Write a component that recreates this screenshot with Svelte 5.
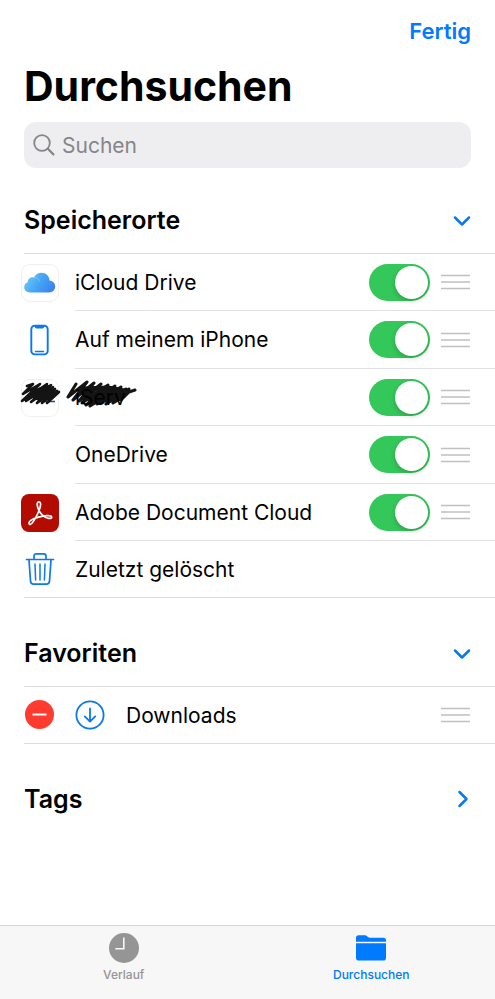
<script lang="ts">
    type Location = {
        id: string;
        name: string;
        enabled?: boolean;
        scribbled?: boolean;
    };

    let locations: Location[] = $state([
        { id: "icloud", name: "iCloud Drive", enabled: true },
        { id: "phone", name: "Auf meinem iPhone", enabled: true },
        { id: "iserv", name: "iServ", enabled: true, scribbled: true },
        { id: "onedrive", name: "OneDrive", enabled: true },
        { id: "adobe", name: "Adobe Document Cloud", enabled: true },
        { id: "trash", name: "Zuletzt gelöscht" },
    ]);

    let open = $state({ locations: true, favorites: true, tags: false });
    let favorites = $state(["Downloads"]);
    let tab = $state("browse");
    let query = $state("");

    const removeFavorite = (name: string) => {
        favorites = favorites.filter((f) => f !== name);
    };
</script>

{#snippet chevron(isOpen: boolean)}
    <svg class="chevron" class:closed={!isOpen} width="18" height="18" viewBox="0 0 18 18">
        <path d="M2 6.5L9 13.5L16 6.5" />
    </svg>
{/snippet}

{#snippet handle(name: string)}
    <button class="handle" aria-label="{name} verschieben">
        <svg width="29" height="18" viewBox="0 0 29 18">
            <path d="M0 2.5H29M0 9H29M0 15.5H29" stroke="#c0c0c2" stroke-width="1.6" />
        </svg>
    </button>
{/snippet}

{#snippet icon(id: string)}
    {#if id === "icloud"}
        <svg width="38" height="38" viewBox="0 0 38 38">
            <defs>
                <linearGradient id="cloud" x1="0" y1="0.3" x2="1" y2="0.7">
                    <stop offset="0" stop-color="#6cc8fa" />
                    <stop offset="0.5" stop-color="#45a4f5" />
                    <stop offset="1" stop-color="#3b82ee" />
                </linearGradient>
            </defs>
            <rect x="0.5" y="0.5" width="37" height="37" rx="8.5" fill="#fff" stroke="#f0f0f2" />
            <path
                d="M9 28.5C5.6 28.5 3.2 26.4 3.2 23.3C3.2 20.9 4.6 19 6.8 18.3C6.5 15.2 9.4 12.6 12.9 13.4C14.4 10.4 17.2 8.7 20.5 8.7C25 8.7 28.3 12 28.6 16.4C32 16.9 34.2 19.2 34.2 22.3C34.2 25.9 31.6 28.5 28.2 28.5Z"
                fill="url(#cloud)"
            />
            <path d="M12.9 13.4C15.8 13.4 18 15.2 18.8 17.6" fill="none" stroke="#fff" stroke-opacity="0.25" />
        </svg>
    {:else if id === "phone"}
        <svg width="38" height="38" viewBox="0 0 38 38" fill="none" stroke="#0a78f0">
            <rect x="10.3" y="4.8" width="16.4" height="28.6" rx="3.4" stroke-width="1.9" />
            <path d="M14 5H23V6C23 6.9 22.4 7.4 21.5 7.4H15.5C14.6 7.4 14 6.9 14 6Z" fill="#0a78f0" stroke="none" />
            <path d="M14.5 30.4H22.5" stroke-width="1.5" stroke-linecap="round" />
        </svg>
    {:else if id === "iserv"}
        <svg width="38" height="38" viewBox="0 0 38 38">
            <rect x="0.5" y="0.5" width="37" height="37" rx="8.5" fill="#fff" stroke="#f0f0f2" />
            <path d="M18 22.5H34" stroke="#284a7c" stroke-width="1.5" />
        </svg>
    {:else if id === "adobe"}
        <svg width="38" height="38" viewBox="0 0 38 38">
            <rect width="38" height="38" rx="8" fill="#b30b00" />
            <path
                d="M8 29.5C7.6 27 12.5 24.5 17.5 23.1C22.5 21.7 30.3 20.6 30.7 23C31 25.3 25.5 25 21.4 21.2C18 18 16 12.6 16.2 9.8C16.4 7.3 19.4 7.3 19.6 10C19.8 13.8 15.4 23.5 11.8 28.3C10 30.6 8.2 31 8 29.5Z"
                fill="none"
                stroke="#fff"
                stroke-width="1.7"
                stroke-linejoin="round"
            />
        </svg>
    {:else if id === "trash"}
        <svg width="38" height="38" viewBox="0 0 38 38" fill="none" stroke="#0a78f0" stroke-width="1.7" stroke-linecap="round" stroke-linejoin="round">
            <path d="M5.5 9.5H32.5" />
            <path d="M13 9V6.2C13 4.7 14 3.8 15.4 3.8H22.6C24 3.8 25 4.7 25 6.2V9" />
            <path d="M8 9.8L9.5 31C9.6 33 10.9 34.2 12.8 34.2H25.2C27.1 34.2 28.4 33 28.5 31L30 9.8" />
            <path d="M14 14L14.6 30M19 14V30M24 14L23.4 30" stroke-width="1.5" />
        </svg>
    {/if}
{/snippet}

<div class="page">
    <main>
        <header>
            <button class="done">Fertig</button>
            <h1>Durchsuchen</h1>
            <label class="search">
                <svg width="22" height="22" viewBox="0 0 22 22" fill="none" stroke="#85858a" stroke-linecap="round">
                    <circle cx="9" cy="9" r="7.8" stroke-width="1.8" />
                    <path d="M14.8 14.8L20.4 20.4" stroke-width="2.2" />
                </svg>
                <input type="search" placeholder="Suchen" aria-label="Suchen" bind:value={query} />
            </label>
        </header>

        <section>
            <h2>
                <button onclick={() => (open.locations = !open.locations)} aria-expanded={open.locations}>
                    Speicherorte
                    {@render chevron(open.locations)}
                </button>
            </h2>
            {#if open.locations}
                <ul>
                    {#each locations as location (location.id)}
                        <li>
                            <span class="icon">{@render icon(location.id)}</span>
                            {#if location.scribbled}
                                <svg class="scribble" width="120" height="30" viewBox="0 0 120 30" aria-hidden="true">
                                    <path
                                        d="M7 6L13 4L3 14L20 4L2 21L27 4L6 21L31 5L11 22L33 7L17 23L35 9L22 23L37 11L27 23L39 12"
                                        stroke-width="2.6"
                                    />
                                    <path d="M12 12L28 7L30 12L14 17L20 19L30 15" stroke-width="4" />
                                    <path
                                        d="M56 4L48 17L67 2L53 20L74 3L59 21L81 4L62 23L88 5L66 25L95 6L70 26L101 7L77 24L106 9L86 24L109 9L93 23L106 15L101 20L109 12L115 10"
                                        stroke-width="3"
                                    />
                                    <path d="M64 9L88 8L104 11L66 15L102 16L70 20L90 20" stroke-width="5" />
                                </svg>
                            {/if}
                            <div class="row">
                                <label for={location.id}>{location.name}</label>
                                {#if location.enabled !== undefined}
                                    <input id={location.id} class="switch" type="checkbox" role="switch" bind:checked={location.enabled} />
                                    {@render handle(location.name)}
                                {/if}
                            </div>
                        </li>
                    {/each}
                </ul>
            {/if}
        </section>

        <section>
            <h2>
                <button onclick={() => (open.favorites = !open.favorites)} aria-expanded={open.favorites}>
                    Favoriten
                    {@render chevron(open.favorites)}
                </button>
            </h2>
            {#if open.favorites}
                <ul>
                    {#each favorites as favorite (favorite)}
                        <li>
                            <button class="icon" aria-label="{favorite} entfernen" onclick={() => removeFavorite(favorite)}>
                                <svg width="30" height="30" viewBox="0 0 30 30">
                                    <circle cx="14.5" cy="14.5" r="14.5" fill="#ff3b30" />
                                    <path d="M7.5 14.5H21.5" stroke="#fff" stroke-width="2" />
                                </svg>
                            </button>
                            <div class="row">
                                <svg class="download" width="30" height="30" viewBox="0 0 30 30" fill="none" stroke="#0a78f0" stroke-width="1.8" stroke-linecap="round" stroke-linejoin="round">
                                    <circle cx="15" cy="15" r="13.6" />
                                    <path d="M15 8.5V21.3M9.8 16.4L15 21.6L20.2 16.4" />
                                </svg>
                                <span class="name">{favorite}</span>
                                {@render handle(favorite)}
                            </div>
                        </li>
                    {/each}
                </ul>
            {/if}
        </section>

        <section>
            <h2>
                <button onclick={() => (open.tags = !open.tags)} aria-expanded={open.tags}>
                    Tags
                    {@render chevron(open.tags)}
                </button>
            </h2>
        </section>
    </main>

    <nav>
        <button class:active={tab === "recents"} onclick={() => (tab = "recents")}>
            <svg width="32" height="32" viewBox="0 0 32 32">
                <circle cx="16" cy="16" r="15" fill="currentColor" />
                <path d="M15.8 5.5V16.8H7.3" fill="none" stroke="#f7f7f7" stroke-width="1.6" />
            </svg>
            Verlauf
        </button>
        <button class:active={tab === "browse"} onclick={() => (tab = "browse")}>
            <svg width="32" height="32" viewBox="0 0 32 32" fill="currentColor">
                <path d="M1 9.8V6C1 4.2 2 3.3 3.8 3.3H9.5C10.7 3.3 11.3 3.6 12.1 4.3L13 5.1C13.6 5.6 14 5.8 14.9 5.8H28.2C30 5.8 31 6.7 31 8.5V9.8Z" />
                <path d="M1 11.3H31V25.7C31 27.6 30 28.6 28.2 28.6H3.8C2 28.6 1 27.6 1 25.7Z" />
            </svg>
            Durchsuchen
        </button>
    </nav>
</div>

<style>
    :global(body) {
        margin: 0;
        background: #fff;
    }

    .page {
        display: flex;
        flex-direction: column;
        min-height: 100vh;
        font-family: Inter, "Liberation Sans", sans-serif;
        font-size: 21px;
        color: #000;
    }

    main {
        flex: 1;
    }

    button {
        padding: 0;
        border: 0;
        background: none;
        font: inherit;
        color: inherit;
        cursor: pointer;
    }

    header {
        display: flex;
        flex-direction: column;
        padding: 16px 24px 0;
    }

    .done {
        align-self: flex-end;
        font-size: 22px;
        font-weight: 600;
        line-height: 30px;
        color: #007aff;
    }

    h1 {
        margin: 14px 0 10px;
        font-size: 41px;
        font-weight: 700;
        line-height: 52px;
    }

    .search {
        display: flex;
        align-items: center;
        gap: 7px;
        height: 46px;
        padding: 0 9px;
        border-radius: 12px;
        background: #eeeef0;

        & input {
            flex: 1;
            min-width: 0;
            padding: 0;
            border: 0;
            outline: 0;
            background: none;
            font: inherit;
            appearance: none;
        }

        & input::placeholder {
            color: #85858a;
            opacity: 1;
        }
    }

    section {
        margin-top: 22px;
    }

    header + section {
        margin-top: 19px;
    }

    h2 {
        margin: 0;
        font-size: 25px;
        font-weight: 600;

        & button {
            display: flex;
            align-items: center;
            justify-content: space-between;
            width: 100%;
            height: 66px;
            padding: 0 24px;
        }
    }

    .chevron {
        fill: none;
        stroke: #0a78f0;
        stroke-width: 2.5;
        stroke-linecap: round;
        stroke-linejoin: round;

        &.closed {
            transform: rotate(-90deg);
        }
    }

    ul {
        margin: 0 0 0 24px;
        padding: 0;
        list-style: none;
        border-top: 1px solid #dcdcde;
        border-bottom: 1px solid #dcdcde;
    }

    li {
        position: relative;
        display: flex;
        gap: 19px;
        height: 57px;

        &:nth-child(even) {
            height: 58px;
        }

        &:last-child {
            height: 56px;
        }
    }

    .icon {
        display: flex;
        flex: none;
        align-items: center;
        justify-content: center;
        width: 32px;

        & svg {
            flex: none;
        }
    }

    /* positioned so that the label stays on top of the scribble */
    .row {
        position: relative;
        display: flex;
        flex: 1;
        align-items: center;
        gap: 11px;
        padding-right: 25px;
        border-bottom: 1px solid #e2e2e4;

        li:last-child & {
            border-bottom: 0;
        }

        & label,
        & .name {
            flex: 1;
        }
    }

    .download {
        margin-right: 10px;
    }

    .switch {
        appearance: none;
        display: flex;
        align-items: center;
        width: 61px;
        height: 37px;
        margin: 0;
        padding: 0 2px;
        border-radius: 19px;
        background: #e9e9eb;
        cursor: pointer;

        &::before {
            content: "";
            width: 33px;
            height: 33px;
            border-radius: 50%;
            background: #fff;
            box-shadow: 0 2px 5px rgb(0 0 0 / 0.2);
        }

        &:checked {
            justify-content: flex-end;
            background: #34c759;
        }
    }

    .handle {
        display: flex;
        cursor: grab;
    }

    .scribble {
        position: absolute;
        top: 11px;
        left: -4px;
        fill: none;
        stroke: #141414;
        stroke-linecap: round;
        stroke-linejoin: round;
        pointer-events: none;
    }

    nav {
        display: flex;
        border-top: 1px solid #d8d8d8;
        background: #f7f7f7;

        & button {
            display: flex;
            flex: 1;
            flex-direction: column;
            align-items: center;
            gap: 3px;
            padding: 6px 0 16px;
            font-size: 12px;
            font-weight: 500;
            line-height: 16px;
            color: #959595;
        }

        & .active {
            color: #007aff;
        }
    }
</style>
